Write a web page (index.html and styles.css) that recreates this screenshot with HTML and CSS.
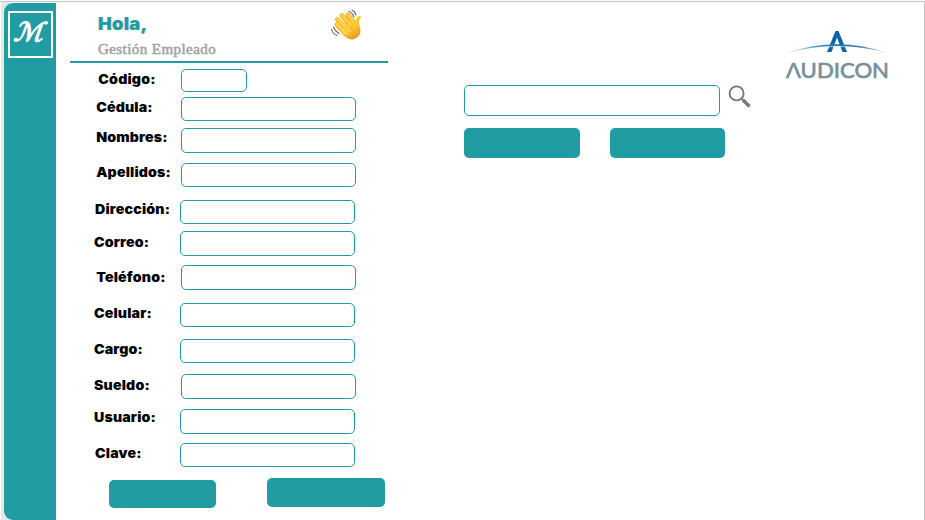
FILE: index.html
```html
<!DOCTYPE html>
<html lang="es">
<head>
<meta charset="utf-8">
<title>Gestión Empleado</title>
<link rel="stylesheet" href="styles.css">
</head>
<body>
<div class="window">
  <aside class="sidebar"><div class="rail"><div class="monogram"><span>ℳ</span></div></div></aside>
  <main class="form-panel">
    <header class="heading">
      <div>
        <h1>Hola,</h1>
        <h2>Gestión Empleado</h2>
      </div>
      <svg class="wave" width="34" height="34" viewBox="0 0 34 34">
        <defs><linearGradient id="skin" x1="0" y1="0" x2=".6" y2="1"><stop offset="0" stop-color="#ffd24a"/><stop offset=".65" stop-color="#fcc42e"/><stop offset="1" stop-color="#e99a1e"/></linearGradient></defs>
        <g fill="none" stroke="#f0a92a" stroke-width="4.800" stroke-linecap="round"><path d="M7 15.5 15 24M7.500 10.500 18 21M12 6.500 21 17M18 6 24 14"/></g>
        <path d="M10 21C13 27 17 30.500 22 30.500C27 30 31 26 30.500 21C30 17 28.500 15 29 12L31 8.500C31.500 6.500 28 6 26.500 9L25 13L14 17Z" fill="url(#skin)"/>
        <g fill="none" stroke="#ffcf45" stroke-width="3.400" stroke-linecap="round"><path d="M7 15 16 24M7.500 10 19 21M12 6 22 17M18 5.500 25 15"/></g>
        <path d="M25 13C22 15 21 18 22 21" fill="none" stroke="#e9a125" stroke-width=".8"/>
        <g fill="none" stroke="#666" stroke-width="1.100" stroke-linecap="round"><path d="M18.500 2.500C21 3 23 5 24 8M22 1C24 2 25.500 4 26 6M3.500 18C4.500 21 6.500 23 9 24.500M1.500 20C2 23 4 25.500 7 26.500"/></g>
      </svg>
    </header>
    <form class="fields">
      <div class="row r1"><label for="f1">Código:</label><input id="f1"></div>
      <div class="row r2"><label for="f2">Cédula:</label><input id="f2"></div>
      <div class="row r3"><label for="f3">Nombres:</label><input id="f3"></div>
      <div class="row r4"><label for="f4">Apellidos:</label><input id="f4"></div>
      <div class="row r5"><label for="f5">Dirección:</label><input id="f5"></div>
      <div class="row r6"><label for="f6">Correo:</label><input id="f6"></div>
      <div class="row r7"><label for="f7">Teléfono:</label><input id="f7"></div>
      <div class="row r8"><label for="f8">Celular:</label><input id="f8"></div>
      <div class="row r9"><label for="f9">Cargo:</label><input id="f9"></div>
      <div class="row r10"><label for="f10">Sueldo:</label><input id="f10"></div>
      <div class="row r11"><label for="f11">Usuario:</label><input id="f11"></div>
      <div class="row r12"><label for="f12">Clave:</label><input id="f12"></div>
      <div class="actions"><button type="button" class="btn first"></button><button type="button" class="btn second"></button></div>
    </form>
  </main>
  <section class="search">
    <div class="search-bar">
      <input>
      <svg width="24" height="24" viewBox="0 0 24 24" fill="none" stroke="#787878"><circle cx="8.600" cy="8.400" r="7" stroke-width="1.900"/><path d="M13.500 13.500 16 16" stroke-width="1.800"/><path d="M15 15 21.500 21.500" stroke-width="3.600"/></svg>
    </div>
    <div class="search-actions"><button type="button" class="btn"></button><button type="button" class="btn"></button></div>
  </section>
  <div class="brand">
    <svg width="110" height="52" viewBox="0 0 110 52">
      <defs><linearGradient id="arc"><stop offset="0" stop-color="#9dcfd9" stop-opacity=".6"/><stop offset=".25" stop-color="#65adc9"/><stop offset=".5" stop-color="#1672b0"/><stop offset=".75" stop-color="#4b86aa"/><stop offset="1" stop-color="#aac4d2" stop-opacity=".6"/></linearGradient></defs>
      <path d="M42 22 50.500 1H53.500L62 22H57.500L52 7.500 46.500 22Z" fill="#0864ad"/>
      <path d="M0 23.500Q52 5 104 23.500Q52 8.500 0 23.500Z" fill="url(#arc)"/>
      <path d="M44 16.800Q52 16 60 16.800" fill="none" stroke="#fff" stroke-width=".6"/>
      <text x="1" y="48" textLength="103" lengthAdjust="spacingAndGlyphs">AUDICON</text>
      <path d="M8.500 36.500 13.400 48.500H3.600Z" fill="#fff"/>
    </svg>
  </div>
</div>
</body>
</html>
```
FILE: styles.css
```css
* { box-sizing: border-box; }
body { margin: 0; padding-top: 1px; background: #fff; font-family: Inter, "Liberation Sans", sans-serif; overflow: hidden; }
.window { display: flex; align-items: flex-start; width: 925px; height: 519px; border-top: 1px solid #c4c4c4; border-right: 1px solid #c4c4c4; padding-left: 1px; }
.sidebar { width: 55px; height: 518px; padding: 1px 0 0 3px; background: linear-gradient(90deg, #e7e9e9 10px, #fff 10px); }
.rail { width: 52px; height: 517px; background: #229ca3; border-radius: 9px 0 0 9px; padding: 8px 3px 0 4px; }
.monogram { display: flex; align-items: center; justify-content: center; width: 45px; height: 47px; border: 2px solid #fff; color: #fff; font: 26px/40px "DejaVu Sans", sans-serif; -webkit-text-stroke: 1.1px #fff; padding-bottom: 5px; }
.monogram span { transform: skewX(-20deg) scaleX(1.05); }
.form-panel { width: 350px; margin-left: 14px; }
.heading { display: flex; justify-content: space-between; width: 318px; height: 61px; border-bottom: 2px solid #229ca3; padding: 12px 26px 0 28px; }
h1, h2 { margin: 0; white-space: nowrap; }
h1 { font-size: 17px; line-height: 20px; font-weight: 900; color: #229ca3; letter-spacing: .2px; -webkit-text-stroke: .2px #229ca3; transform: scaleX(1.08); transform-origin: left; }
h2 { font: 15px/20px "Liberation Serif", serif; color: #a5a5a5; margin-top: 5px; -webkit-text-stroke: .6px #a5a5a5; letter-spacing: .43px; }
.wave { flex: none; margin-top: -5px; margin-right: -2px; }
.fields { margin: 6px 0 0 24px; }
.row { display: flex; align-items: flex-start; }
label { width: 86px; flex: none; height: 20px; line-height: 20px; font-size: 13px; font-weight: 900; letter-spacing: .15px; color: #000; white-space: nowrap; transform: scaleX(1.09); transform-origin: left; }
input { display: block; width: 175px; height: 24px; margin: 0; padding: 0 6px; border: 1px solid #229ca3; border-radius: 5px; background: #fff; outline: none; font: 13px Inter, sans-serif; }
.r1 { height: 28px; } .r1 label { padding-left: 4px; } .r1 input { width: 66px; height: 23px; }
.r2 { height: 31px; } .r2 label { padding-left: 2px; }
.r3 { height: 35px; } .r3 label { padding-left: 2px; margin-top: -1px; }
.r4 { height: 37px; } .r4 label { padding-left: 2px; margin-top: -1px; }
.r5 { height: 31px; } .r5 label { padding-left: 1px; margin-top: -1px; }
.r6 { height: 34px; } .r6 label { margin-top: 1px; }
.r7 { height: 38px; } .r7 label { padding-left: 2px; margin-top: 2px; }
.r8 { height: 36px; }
.r9 { height: 35px; }
.r10 { height: 35px; } .r10 label { margin-top: 1px; }
.r11 { height: 34px; } .r11 label { margin-top: -2px; }
.r12 { height: 35px; } .r12 label { padding-left: 1px; }
.r1 label, .r2 label, .r3 label, .r4 label, .r7 label, .r10 label { width: 87px; }
.r3 input, .r6 input, .r7 input, .r10 input, .r11 input { height: 25px; }
input { position: relative; }
.btn { display: block; padding: 0; border: 0; border-radius: 5px; background: #229ca3; }
.actions { display: flex; margin-left: 15px; }
.first { width: 107px; height: 28px; margin-top: 2px; }
.second { width: 118px; height: 29px; margin-left: 51px; }
.search { width: 290px; margin: 83px 0 0 44px; }
.search-bar { display: flex; gap: 8px; }
.search-bar input { width: 256px; height: 31px; }
.search-actions { display: flex; gap: 30px; margin-top: 12px; }
.search-actions .btn { width: 116px; height: 30px; }
.search-actions .btn + .btn { width: 115px; }
.brand { margin: 28px 0 0 31px; }
.brand svg { display: block; }
.brand text { font: 21.500px Lato, sans-serif; fill: #78909c; stroke: #78909c; stroke-width: .7px; }
```
